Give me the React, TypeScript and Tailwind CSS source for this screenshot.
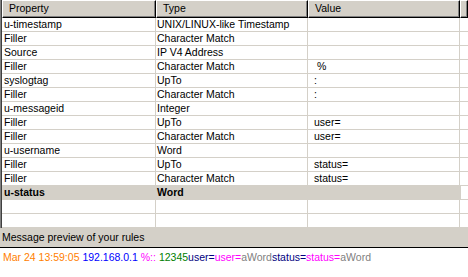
import React from "react";

type Row = { prop: string; type: string; value: string; selected?: boolean };

const ROWS: Row[] = [
  { prop: "u-timestamp", type: "UNIX/LINUX-like Timestamp", value: "" },
  { prop: "Filler", type: "Character Match", value: "" },
  { prop: "Source", type: "IP V4 Address", value: "" },
  { prop: "Filler", type: "Character Match", value: "\u00a0%" },
  { prop: "syslogtag", type: "UpTo", value: ":" },
  { prop: "Filler", type: "Character Match", value: ":" },
  { prop: "u-messageid", type: "Integer", value: "" },
  { prop: "Filler", type: "UpTo", value: "user=" },
  { prop: "Filler", type: "Character Match", value: "user=" },
  { prop: "u-username", type: "Word", value: "" },
  { prop: "Filler", type: "UpTo", value: "status=" },
  { prop: "Filler", type: "Character Match", value: "status=" },
  { prop: "u-status", type: "Word", value: "", selected: true },
  { prop: "", type: "", value: "" },
  { prop: "", type: "", value: "" },
];

const font = { fontFamily: '"Liberation Sans", Arial, sans-serif' };

function HeaderCell({ label, className }: { label: string; className: string }) {
  return (
    <div
      className={`h-[18px] shrink-0 border-t border-l border-white border-r border-b border-r-black border-b-black bg-[#d4d0c8] shadow-[inset_-1px_-1px_#808080] leading-[15px] pl-[6px] overflow-hidden whitespace-nowrap ${className}`}
    >
      {label}
    </div>
  );
}

export default function App() {
  return (
    <div
      className="w-[468px] h-[277px] overflow-hidden bg-[#d4d0c8] text-black text-[10.5px] flex flex-col"
      style={font}
    >
      {/* rule list */}
      <div className="h-[228px] shrink-0 border-l border-[#808080]">
        <div className="h-full border-l border-[#404040] bg-white flex flex-col">
          <div className="flex">
            <HeaderCell label="Property" className="w-[154px]" />
            <HeaderCell label="Type" className="w-[152px]" />
            <HeaderCell label="Value" className="w-[152px]" />
            <HeaderCell label="" className="flex-1" />
          </div>
          {ROWS.map((r, i) =>
            r.selected ? (
              <div key={i} className="flex h-[14px] border-b border-[#d4d0c8] leading-[13px] font-bold">
                <div className="w-[458px] shrink-0 flex bg-[#d4d0c8]">
                  <div className="w-[154px] shrink-0 pl-[2px]">{r.prop}</div>
                  <div className="w-[152px] shrink-0 pl-[1px]">{r.type}</div>
                </div>
                <div className="flex-1 border-l border-[#d4d0c8]" />
              </div>
            ) : (
              <div key={i} className="flex h-[14px] border-b border-[#d4d0c8] leading-[13px] whitespace-nowrap">
                <div className="w-[154px] shrink-0 border-r border-[#d4d0c8] pl-[2px]">{r.prop}</div>
                <div className="w-[152px] shrink-0 border-r border-[#d4d0c8] pl-[1px]">{r.type}</div>
                <div className="w-[152px] shrink-0 border-r border-[#d4d0c8] pl-[6px]">{r.value}</div>
                <div className="flex-1" />
              </div>
            )
          )}
        </div>
      </div>

      {/* preview */}
      <div className="h-[19px] shrink-0 pl-[2px] leading-[19px] text-[10.5px]">Message preview of your rules</div>
      <div className="flex-1 border-t border-black bg-white pl-[3px] pt-[2px] leading-[14px] whitespace-nowrap text-[10.5px]">
        <span className="text-[#ff8000]">Mar 24 13:59:05 </span>
        <span className="text-[#0000ff]">192.168.0.1 </span>
        <span className="text-[#ff00ff]">%:: </span>
        <span className="text-[#008000]">12345</span>
        <span className="text-[#000080]">user=</span>
        <span className="text-[#ff00ff]">user=</span>
        <span className="text-[#808080]">aWord</span>
        <span className="text-[#000080]">status=</span>
        <span className="text-[#ff00ff]">status=</span>
        <span className="text-[#808080]">aWord</span>
      </div>
    </div>
  );
}
